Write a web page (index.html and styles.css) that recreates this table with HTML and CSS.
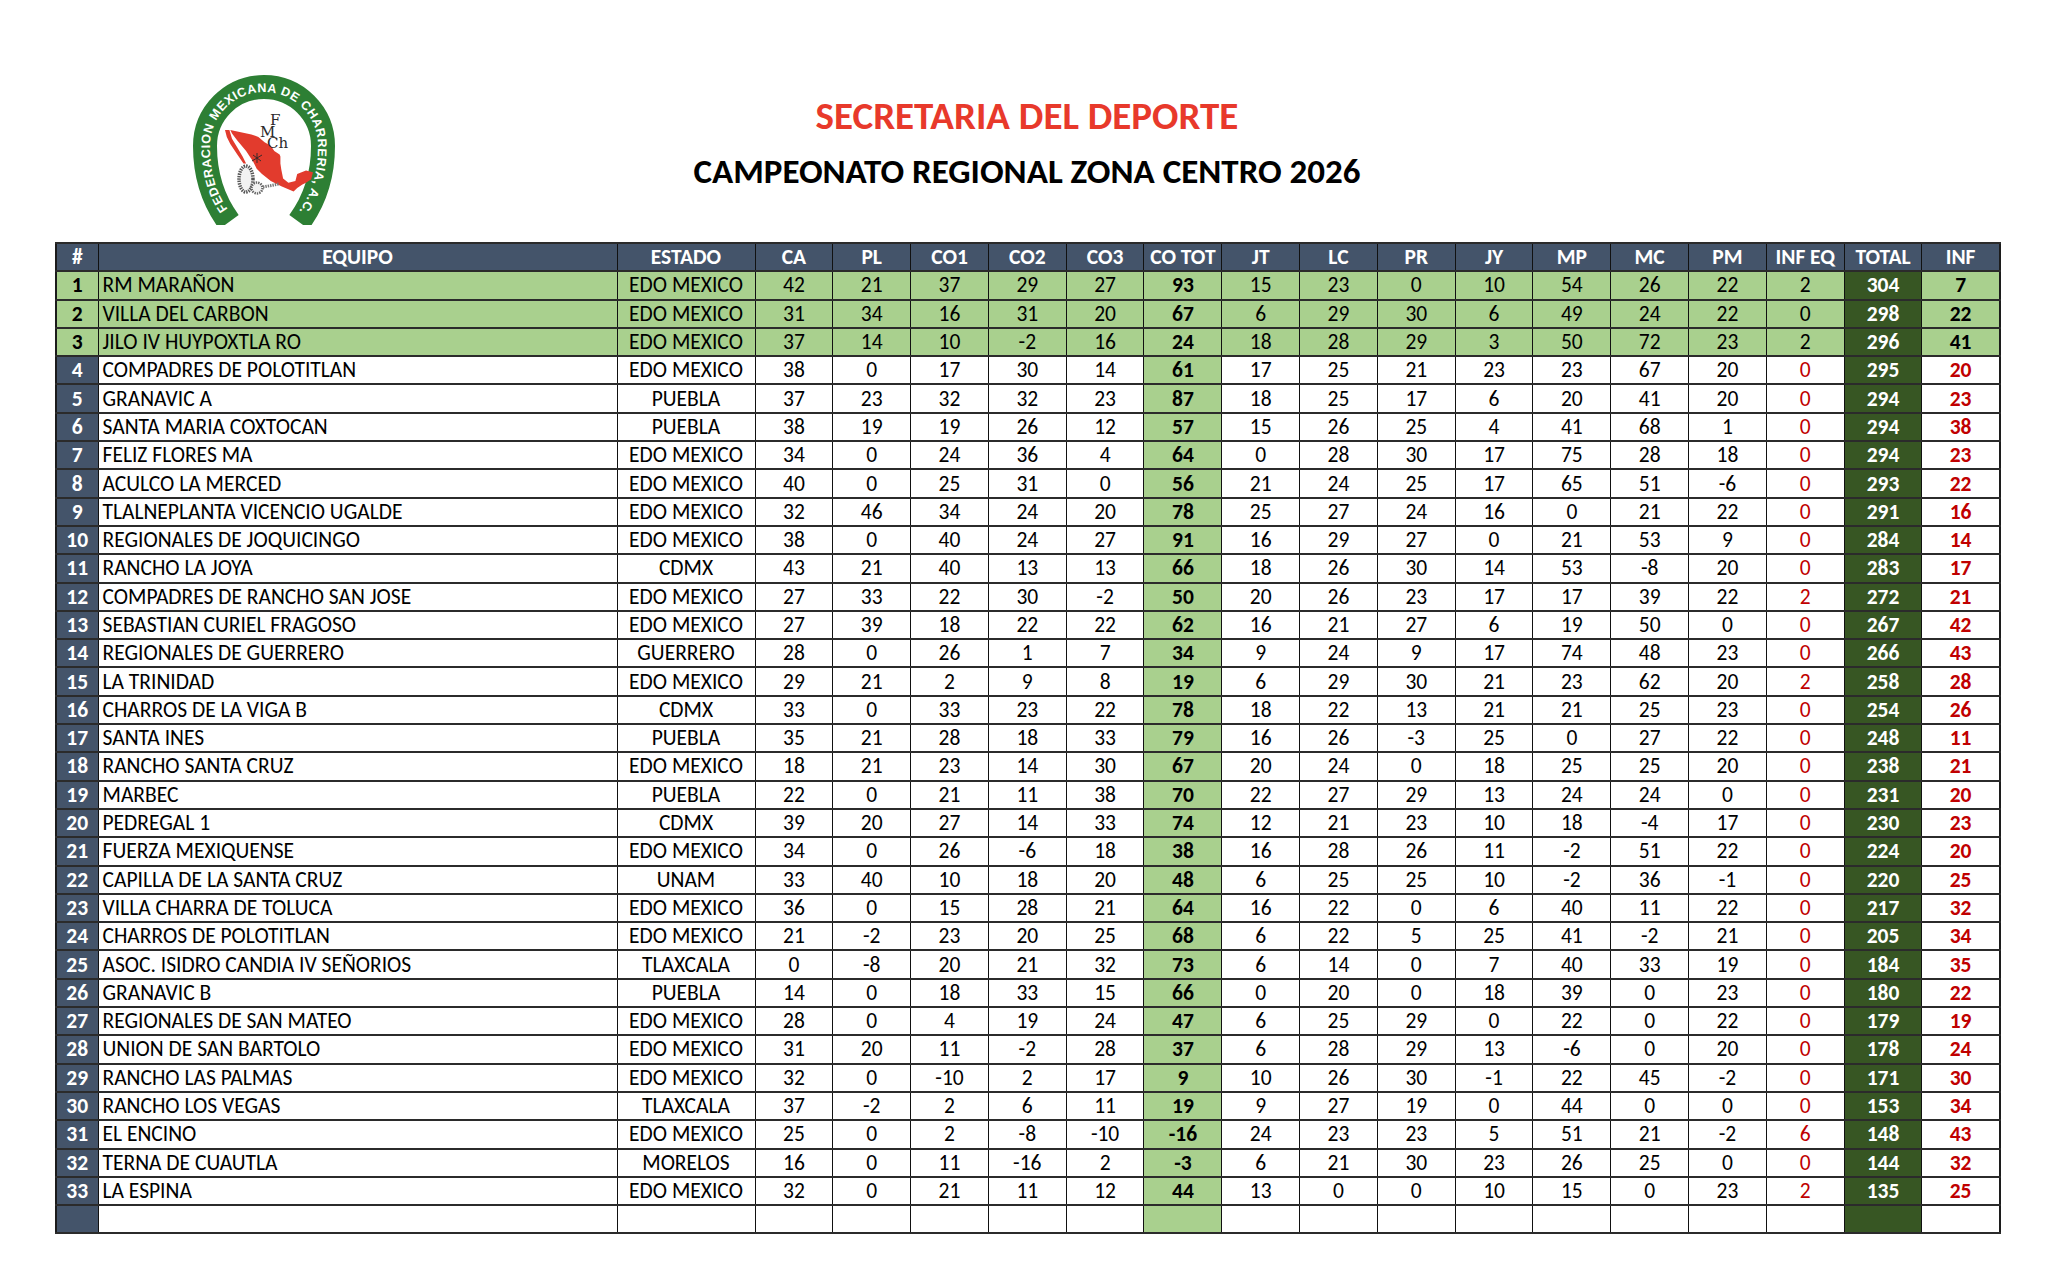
FILE: index.html
```html
<!DOCTYPE html>
<html lang="es">
<head>
<meta charset="utf-8">
<title>Campeonato Regional Zona Centro 2026</title>
<link rel="stylesheet" href="styles.css">
</head>
<body>
<div class="page">
  <header class="head">
    <div class="logo">
      <svg width="142" height="150" viewBox="0 0 142 150" xmlns="http://www.w3.org/2000/svg">
        <defs>
          <path id="arcText" d="M38.5 139 C25 122 17 102 17 71 A54 54 0 0 1 125 71 C125 102 117 122 103.5 139"/>
        </defs>
        <path d="M36 147 C22 128 12 105 12 71 A59 59 0 0 1 130 71 C130 105 120 128 106 147" fill="none" stroke="#2d7f34" stroke-width="24"/>
        <text class="logo-arc" fill="#ffffff"><textPath href="#arcText" startOffset="6" textLength="305" lengthAdjust="spacing">FEDERACION MEXICANA DE CHARRERIA, A.C.</textPath></text>
        <polygon fill="#e23b2d" points="37.3,55 58.4,59.4 65.4,62 71.6,67.3 77.8,70.8 81.3,76.1 86.6,79.6 87.4,81.4 87.4,88.4 88.3,94.6 90.1,103.4 95.4,107.8 102.4,106 104.2,99 113,95.5 120,97.2 118.2,104.3 113,107.8 109.4,109.6 104.2,113.1 100.6,116.6 88.3,111.3 77.8,106 69,99 63.7,93.7 60.2,86.7 53.1,76.1 44.3,65.6 39,58.5"/>
        <polygon fill="#e23b2d" points="32,55 36.4,55 39,63.8 44.3,72.6 49.6,81.4 53.1,88.4 50.5,88.4 44.3,79.6 37.3,69.1 33.8,62"/>
        <ellipse cx="53" cy="104" rx="7" ry="13" fill="#f2f2f2" stroke="#555" stroke-width="3.5" stroke-dasharray="1.4 1"/>
        <circle cx="64" cy="113" r="5.5" fill="#f2f2f2" stroke="#666" stroke-width="2.5" stroke-dasharray="1.4 1"/>
        <path d="M70 112 L86 109" stroke="#777" stroke-width="3" stroke-dasharray="1.4 1"/>
        <path d="M60 80 L68 86 M64 78 L64 88 M59 86 L69 80" stroke="#3a2a2a" stroke-width="1"/>
        <text class="logo-mono"><tspan x="77" y="50">F</tspan><tspan x="67" y="62">M</tspan><tspan x="74" y="73">Ch</tspan></text>
      </svg>
    </div>
    <div class="titles">
      <h1 class="t1">SECRETARIA DEL DEPORTE</h1>
      <h2 class="t2">CAMPEONATO REGIONAL ZONA CENTRO 2026</h2>
    </div>
    <div class="spacer"></div>
  </header>

  <table class="standings">
    <colgroup>
      <col class="c-num"><col class="c-team"><col class="c-state">
      <col class="c-val"><col class="c-val"><col class="c-val"><col class="c-val"><col class="c-val"><col class="c-val"><col class="c-val"><col class="c-val"><col class="c-val"><col class="c-val"><col class="c-val"><col class="c-val"><col class="c-val"><col class="c-val"><col class="c-val"><col class="c-val">
    </colgroup>
    <thead>
      <tr><th>#</th><th>EQUIPO</th><th>ESTADO</th><th>CA</th><th>PL</th><th>CO1</th><th>CO2</th><th>CO3</th><th>CO TOT</th><th>JT</th><th>LC</th><th>PR</th><th>JY</th><th>MP</th><th>MC</th><th>PM</th><th>INF EQ</th><th>TOTAL</th><th>INF</th></tr>
    </thead>
    <tbody>
      <tr class="top"><td class="n">1</td><td class="team">RM MARAÑON</td><td>EDO MEXICO</td><td>42</td><td>21</td><td>37</td><td>29</td><td>27</td><td class="cot">93</td><td>15</td><td>23</td><td>0</td><td>10</td><td>54</td><td>26</td><td>22</td><td class="ie">2</td><td class="tot">304</td><td class="inf">7</td></tr>
      <tr class="top"><td class="n">2</td><td class="team">VILLA DEL CARBON</td><td>EDO MEXICO</td><td>31</td><td>34</td><td>16</td><td>31</td><td>20</td><td class="cot">67</td><td>6</td><td>29</td><td>30</td><td>6</td><td>49</td><td>24</td><td>22</td><td class="ie">0</td><td class="tot">298</td><td class="inf">22</td></tr>
      <tr class="top"><td class="n">3</td><td class="team">JILO IV HUYPOXTLA RO</td><td>EDO MEXICO</td><td>37</td><td>14</td><td>10</td><td>-2</td><td>16</td><td class="cot">24</td><td>18</td><td>28</td><td>29</td><td>3</td><td>50</td><td>72</td><td>23</td><td class="ie">2</td><td class="tot">296</td><td class="inf">41</td></tr>
      <tr><td class="n">4</td><td class="team">COMPADRES DE POLOTITLAN</td><td>EDO MEXICO</td><td>38</td><td>0</td><td>17</td><td>30</td><td>14</td><td class="cot">61</td><td>17</td><td>25</td><td>21</td><td>23</td><td>23</td><td>67</td><td>20</td><td class="ie">0</td><td class="tot">295</td><td class="inf">20</td></tr>
      <tr><td class="n">5</td><td class="team">GRANAVIC A</td><td>PUEBLA</td><td>37</td><td>23</td><td>32</td><td>32</td><td>23</td><td class="cot">87</td><td>18</td><td>25</td><td>17</td><td>6</td><td>20</td><td>41</td><td>20</td><td class="ie">0</td><td class="tot">294</td><td class="inf">23</td></tr>
      <tr><td class="n">6</td><td class="team">SANTA MARIA COXTOCAN</td><td>PUEBLA</td><td>38</td><td>19</td><td>19</td><td>26</td><td>12</td><td class="cot">57</td><td>15</td><td>26</td><td>25</td><td>4</td><td>41</td><td>68</td><td>1</td><td class="ie">0</td><td class="tot">294</td><td class="inf">38</td></tr>
      <tr><td class="n">7</td><td class="team">FELIZ FLORES MA</td><td>EDO MEXICO</td><td>34</td><td>0</td><td>24</td><td>36</td><td>4</td><td class="cot">64</td><td>0</td><td>28</td><td>30</td><td>17</td><td>75</td><td>28</td><td>18</td><td class="ie">0</td><td class="tot">294</td><td class="inf">23</td></tr>
      <tr><td class="n">8</td><td class="team">ACULCO LA MERCED</td><td>EDO MEXICO</td><td>40</td><td>0</td><td>25</td><td>31</td><td>0</td><td class="cot">56</td><td>21</td><td>24</td><td>25</td><td>17</td><td>65</td><td>51</td><td>-6</td><td class="ie">0</td><td class="tot">293</td><td class="inf">22</td></tr>
      <tr><td class="n">9</td><td class="team">TLALNEPLANTA VICENCIO UGALDE</td><td>EDO MEXICO</td><td>32</td><td>46</td><td>34</td><td>24</td><td>20</td><td class="cot">78</td><td>25</td><td>27</td><td>24</td><td>16</td><td>0</td><td>21</td><td>22</td><td class="ie">0</td><td class="tot">291</td><td class="inf">16</td></tr>
      <tr><td class="n">10</td><td class="team">REGIONALES DE JOQUICINGO</td><td>EDO MEXICO</td><td>38</td><td>0</td><td>40</td><td>24</td><td>27</td><td class="cot">91</td><td>16</td><td>29</td><td>27</td><td>0</td><td>21</td><td>53</td><td>9</td><td class="ie">0</td><td class="tot">284</td><td class="inf">14</td></tr>
      <tr><td class="n">11</td><td class="team">RANCHO LA JOYA</td><td>CDMX</td><td>43</td><td>21</td><td>40</td><td>13</td><td>13</td><td class="cot">66</td><td>18</td><td>26</td><td>30</td><td>14</td><td>53</td><td>-8</td><td>20</td><td class="ie">0</td><td class="tot">283</td><td class="inf">17</td></tr>
      <tr><td class="n">12</td><td class="team">COMPADRES DE RANCHO SAN JOSE</td><td>EDO MEXICO</td><td>27</td><td>33</td><td>22</td><td>30</td><td>-2</td><td class="cot">50</td><td>20</td><td>26</td><td>23</td><td>17</td><td>17</td><td>39</td><td>22</td><td class="ie">2</td><td class="tot">272</td><td class="inf">21</td></tr>
      <tr><td class="n">13</td><td class="team">SEBASTIAN CURIEL FRAGOSO</td><td>EDO MEXICO</td><td>27</td><td>39</td><td>18</td><td>22</td><td>22</td><td class="cot">62</td><td>16</td><td>21</td><td>27</td><td>6</td><td>19</td><td>50</td><td>0</td><td class="ie">0</td><td class="tot">267</td><td class="inf">42</td></tr>
      <tr><td class="n">14</td><td class="team">REGIONALES DE GUERRERO</td><td>GUERRERO</td><td>28</td><td>0</td><td>26</td><td>1</td><td>7</td><td class="cot">34</td><td>9</td><td>24</td><td>9</td><td>17</td><td>74</td><td>48</td><td>23</td><td class="ie">0</td><td class="tot">266</td><td class="inf">43</td></tr>
      <tr><td class="n">15</td><td class="team">LA TRINIDAD</td><td>EDO MEXICO</td><td>29</td><td>21</td><td>2</td><td>9</td><td>8</td><td class="cot">19</td><td>6</td><td>29</td><td>30</td><td>21</td><td>23</td><td>62</td><td>20</td><td class="ie">2</td><td class="tot">258</td><td class="inf">28</td></tr>
      <tr><td class="n">16</td><td class="team">CHARROS DE LA VIGA B</td><td>CDMX</td><td>33</td><td>0</td><td>33</td><td>23</td><td>22</td><td class="cot">78</td><td>18</td><td>22</td><td>13</td><td>21</td><td>21</td><td>25</td><td>23</td><td class="ie">0</td><td class="tot">254</td><td class="inf">26</td></tr>
      <tr><td class="n">17</td><td class="team">SANTA INES</td><td>PUEBLA</td><td>35</td><td>21</td><td>28</td><td>18</td><td>33</td><td class="cot">79</td><td>16</td><td>26</td><td>-3</td><td>25</td><td>0</td><td>27</td><td>22</td><td class="ie">0</td><td class="tot">248</td><td class="inf">11</td></tr>
      <tr><td class="n">18</td><td class="team">RANCHO SANTA CRUZ</td><td>EDO MEXICO</td><td>18</td><td>21</td><td>23</td><td>14</td><td>30</td><td class="cot">67</td><td>20</td><td>24</td><td>0</td><td>18</td><td>25</td><td>25</td><td>20</td><td class="ie">0</td><td class="tot">238</td><td class="inf">21</td></tr>
      <tr><td class="n">19</td><td class="team">MARBEC</td><td>PUEBLA</td><td>22</td><td>0</td><td>21</td><td>11</td><td>38</td><td class="cot">70</td><td>22</td><td>27</td><td>29</td><td>13</td><td>24</td><td>24</td><td>0</td><td class="ie">0</td><td class="tot">231</td><td class="inf">20</td></tr>
      <tr><td class="n">20</td><td class="team">PEDREGAL 1</td><td>CDMX</td><td>39</td><td>20</td><td>27</td><td>14</td><td>33</td><td class="cot">74</td><td>12</td><td>21</td><td>23</td><td>10</td><td>18</td><td>-4</td><td>17</td><td class="ie">0</td><td class="tot">230</td><td class="inf">23</td></tr>
      <tr><td class="n">21</td><td class="team">FUERZA MEXIQUENSE</td><td>EDO MEXICO</td><td>34</td><td>0</td><td>26</td><td>-6</td><td>18</td><td class="cot">38</td><td>16</td><td>28</td><td>26</td><td>11</td><td>-2</td><td>51</td><td>22</td><td class="ie">0</td><td class="tot">224</td><td class="inf">20</td></tr>
      <tr><td class="n">22</td><td class="team">CAPILLA DE LA SANTA CRUZ</td><td>UNAM</td><td>33</td><td>40</td><td>10</td><td>18</td><td>20</td><td class="cot">48</td><td>6</td><td>25</td><td>25</td><td>10</td><td>-2</td><td>36</td><td>-1</td><td class="ie">0</td><td class="tot">220</td><td class="inf">25</td></tr>
      <tr><td class="n">23</td><td class="team">VILLA CHARRA DE TOLUCA</td><td>EDO MEXICO</td><td>36</td><td>0</td><td>15</td><td>28</td><td>21</td><td class="cot">64</td><td>16</td><td>22</td><td>0</td><td>6</td><td>40</td><td>11</td><td>22</td><td class="ie">0</td><td class="tot">217</td><td class="inf">32</td></tr>
      <tr><td class="n">24</td><td class="team">CHARROS DE POLOTITLAN</td><td>EDO MEXICO</td><td>21</td><td>-2</td><td>23</td><td>20</td><td>25</td><td class="cot">68</td><td>6</td><td>22</td><td>5</td><td>25</td><td>41</td><td>-2</td><td>21</td><td class="ie">0</td><td class="tot">205</td><td class="inf">34</td></tr>
      <tr><td class="n">25</td><td class="team">ASOC. ISIDRO CANDIA IV SEÑORIOS</td><td>TLAXCALA</td><td>0</td><td>-8</td><td>20</td><td>21</td><td>32</td><td class="cot">73</td><td>6</td><td>14</td><td>0</td><td>7</td><td>40</td><td>33</td><td>19</td><td class="ie">0</td><td class="tot">184</td><td class="inf">35</td></tr>
      <tr><td class="n">26</td><td class="team">GRANAVIC B</td><td>PUEBLA</td><td>14</td><td>0</td><td>18</td><td>33</td><td>15</td><td class="cot">66</td><td>0</td><td>20</td><td>0</td><td>18</td><td>39</td><td>0</td><td>23</td><td class="ie">0</td><td class="tot">180</td><td class="inf">22</td></tr>
      <tr><td class="n">27</td><td class="team">REGIONALES DE SAN MATEO</td><td>EDO MEXICO</td><td>28</td><td>0</td><td>4</td><td>19</td><td>24</td><td class="cot">47</td><td>6</td><td>25</td><td>29</td><td>0</td><td>22</td><td>0</td><td>22</td><td class="ie">0</td><td class="tot">179</td><td class="inf">19</td></tr>
      <tr><td class="n">28</td><td class="team">UNION DE SAN BARTOLO</td><td>EDO MEXICO</td><td>31</td><td>20</td><td>11</td><td>-2</td><td>28</td><td class="cot">37</td><td>6</td><td>28</td><td>29</td><td>13</td><td>-6</td><td>0</td><td>20</td><td class="ie">0</td><td class="tot">178</td><td class="inf">24</td></tr>
      <tr><td class="n">29</td><td class="team">RANCHO LAS PALMAS</td><td>EDO MEXICO</td><td>32</td><td>0</td><td>-10</td><td>2</td><td>17</td><td class="cot">9</td><td>10</td><td>26</td><td>30</td><td>-1</td><td>22</td><td>45</td><td>-2</td><td class="ie">0</td><td class="tot">171</td><td class="inf">30</td></tr>
      <tr><td class="n">30</td><td class="team">RANCHO LOS VEGAS</td><td>TLAXCALA</td><td>37</td><td>-2</td><td>2</td><td>6</td><td>11</td><td class="cot">19</td><td>9</td><td>27</td><td>19</td><td>0</td><td>44</td><td>0</td><td>0</td><td class="ie">0</td><td class="tot">153</td><td class="inf">34</td></tr>
      <tr><td class="n">31</td><td class="team">EL ENCINO</td><td>EDO MEXICO</td><td>25</td><td>0</td><td>2</td><td>-8</td><td>-10</td><td class="cot">-16</td><td>24</td><td>23</td><td>23</td><td>5</td><td>51</td><td>21</td><td>-2</td><td class="ie">6</td><td class="tot">148</td><td class="inf">43</td></tr>
      <tr><td class="n">32</td><td class="team">TERNA DE CUAUTLA</td><td>MORELOS</td><td>16</td><td>0</td><td>11</td><td>-16</td><td>2</td><td class="cot">-3</td><td>6</td><td>21</td><td>30</td><td>23</td><td>26</td><td>25</td><td>0</td><td class="ie">0</td><td class="tot">144</td><td class="inf">32</td></tr>
      <tr><td class="n">33</td><td class="team">LA ESPINA</td><td>EDO MEXICO</td><td>32</td><td>0</td><td>21</td><td>11</td><td>12</td><td class="cot">44</td><td>13</td><td>0</td><td>0</td><td>10</td><td>15</td><td>0</td><td>23</td><td class="ie">2</td><td class="tot">135</td><td class="inf">25</td></tr>
      <tr class="blank"><td class="n"></td><td class="team"></td><td></td><td></td><td></td><td></td><td></td><td></td><td class="cot"></td><td></td><td></td><td></td><td></td><td></td><td></td><td></td><td class="ie"></td><td class="tot"></td><td class="inf"></td></tr>
    </tbody>
  </table>
</div>
</body>
</html>
```

FILE: styles.css
```css
* { box-sizing: border-box; }

html, body {
  margin: 0;
  padding: 0;
  background: #ffffff;
}

body {
  font-family: Carlito, Calibri, Lato, "Liberation Sans", sans-serif;
  color: #000000;
}

.page {
  width: 2048px;
  padding-left: 55px;
}

.head {
  width: 1944px;
  height: 242px;
  display: grid;
  grid-template-columns: 1fr auto 1fr;
}

.logo {
  padding-top: 75px;
  padding-left: 138px;
}

.logo svg { display: block; }

.logo-arc {
  font-family: "Liberation Sans", Arial, sans-serif;
  font-weight: 700;
  font-size: 12.5px;
}

.logo-mono {
  font-family: "DejaVu Serif", serif;
  font-size: 15px;
  fill: #2a2a2a;
}

.titles {
  padding-top: 95px;
  display: flex;
  flex-direction: column;
  align-items: center;
  gap: 14px;
}

.t1, .t2 {
  margin: 0;
  font-weight: 700;
  line-height: 42px;
  white-space: nowrap;
}

.t1 {
  color: #e8392b;
  font-size: 39px;
}

.t2 {
  color: #000000;
  font-size: 35px;
  line-height: 40px;
}

.standings {
  width: 1944px;
  table-layout: fixed;
  border-collapse: collapse;
  border: 2px solid #1c1c1c;
  font-size: 21.5px;
}

.c-num { width: 42px; }
.c-team { width: 519px; }
.c-state { width: 138px; }
.c-val { width: 77.8px; }

.standings th,
.standings td {
  height: 28.3px;
  padding: 0;
  line-height: 24px;
  text-align: center;
  white-space: nowrap;
  overflow: hidden;
  border-left: 1px solid #111;
  border-right: 1px solid #111;
  border-top: 2px solid #2b2b2b;
  border-bottom: 2px solid #2b2b2b;
}

.standings th {
  background: #44546a;
  color: #ffffff;
  font-weight: 700;
}

.standings td.n {
  background: #44546a;
  color: #ffffff;
  font-weight: 700;
}

.standings td.team {
  text-align: left;
  padding-left: 4px;
}

.standings td.cot {
  background: #a9d08e;
  font-weight: 700;
}

.standings td.tot {
  background: #375623;
  color: #ffffff;
  font-weight: 700;
}

.standings td.ie { color: #c00000; }

.standings td.inf {
  color: #c00000;
  font-weight: 700;
}

.standings tr.top td { background: #a9d08e; }
.standings tr.top td.n { background: #a9d08e; color: #000000; }
.standings tr.top td.tot { background: #375623; color: #ffffff; }
.standings tr.top td.ie,
.standings tr.top td.inf { color: #000000; }
```
